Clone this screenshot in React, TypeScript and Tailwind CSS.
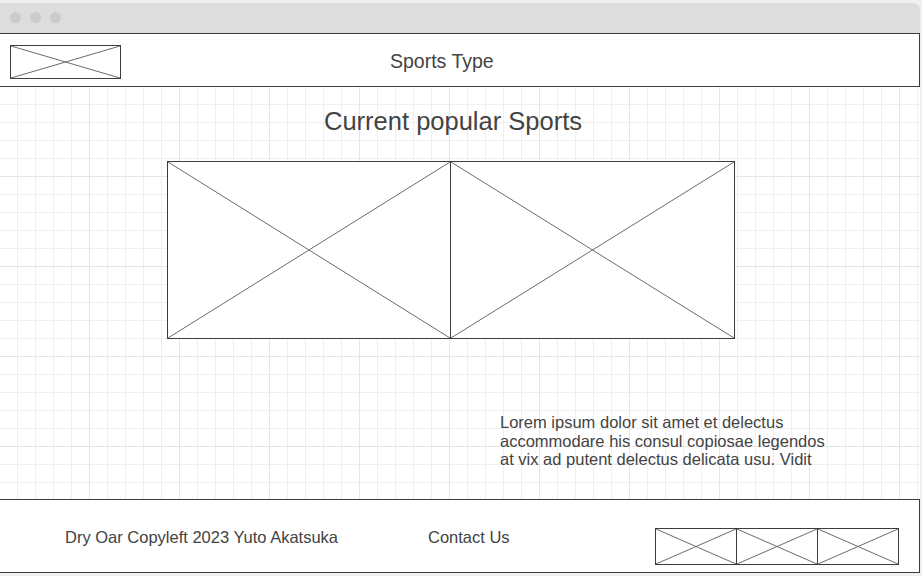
import React from "react";

const XBox = ({ className }: { className: string }) => {
  return (
    <div className={`border border-[#3c3c3c] bg-white ${className}`}>
      <svg className="block w-full h-full" viewBox="0 0 100 100" preserveAspectRatio="none">
        <line x1="0" y1="0" x2="100" y2="100" stroke="#6b6b6b" strokeWidth="1" vectorEffect="non-scaling-stroke" />
        <line x1="0" y1="100" x2="100" y2="0" stroke="#6b6b6b" strokeWidth="1" vectorEffect="non-scaling-stroke" />
      </svg>
    </div>
  );
};

const Dot = () => <span className="w-[11px] h-[11px] rounded-full bg-[#cbcbcb]" />;

export default function App() {
  return (
    <div className="w-[922px] h-[576px] overflow-hidden bg-[#f0f0f0] pt-[3px] font-['Liberation_Sans',Arial,sans-serif] text-[#434343]">
      <div className="w-[920px] flex flex-col">
        {/* title bar */}
        <div className="h-[30px] bg-[#dddddd] rounded-tr-[6px] flex items-center gap-[9px] pl-[10px] pb-[1px]">
          <Dot />
          <Dot />
          <Dot />
        </div>

        {/* header */}
        <div className="h-[54px] bg-white border-y border-r border-[#3c3c3c] flex items-start">
          <XBox className="ml-[10px] mt-[11px] w-[111px] h-[34px]" />
          <span className="ml-[269px] mt-[16px] text-[19.5px] leading-[23px]">Sports Type</span>
        </div>

        {/* canvas with grid */}
        <div className="h-[412px] bg-white bg-[linear-gradient(to_right,#e5e5e5_1px,transparent_1px),linear-gradient(to_bottom,#e5e5e5_1px,transparent_1px),linear-gradient(to_right,#efefef_1px,transparent_1px),linear-gradient(to_bottom,#efefef_1px,transparent_1px)] bg-[size:90px_90px,90px_90px,18px_18px,18px_18px] bg-[position:-1px_-1px] flex flex-col">
          <div className="w-[906px] pt-[19px] text-center text-[25.5px] leading-[30px]">Current popular Sports</div>
          <div className="mt-[25px] ml-[167px] flex">
            <XBox className="w-[284px] h-[178px]" />
            <XBox className="w-[284px] h-[178px] border-l-0" />
          </div>
          <p className="mt-[74px] ml-[500px] w-[335px] text-[16.5px] leading-[18.5px]">
            Lorem ipsum dolor sit amet et delectus accommodare his consul copiosae legendos at vix ad putent delectus delicata usu. Vidit
          </p>
        </div>

        {/* footer */}
        <div className="h-[74px] bg-white border-y border-r border-[#3c3c3c] flex items-start text-[16.5px] leading-[19px]">
          <div className="w-[363px] pl-[65px] pt-[28px]">Dry Oar Copyleft 2023 Yuto Akatsuka</div>
          <div className="w-[292px] pl-[65px] pt-[28px]">Contact Us</div>
          <div className="mt-[28px] flex">
            <XBox className="w-[82px] h-[37px]" />
            <XBox className="w-[81px] h-[37px] border-l-0" />
            <XBox className="w-[81px] h-[37px] border-l-0" />
          </div>
        </div>
      </div>
    </div>
  );
}
